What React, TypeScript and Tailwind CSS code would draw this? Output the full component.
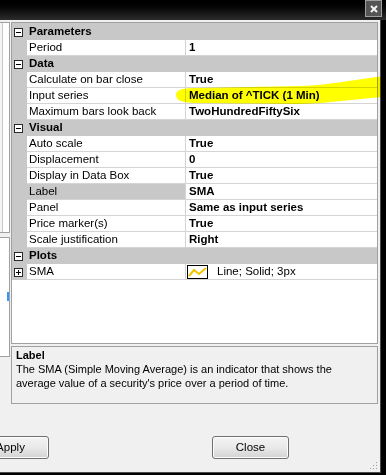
import type { ReactNode } from 'react';

function ToggleBox({ open }: { open: boolean }) {
  return (
    <span className="relative flex h-[9px] w-[9px] items-center justify-center border border-[#2a2a2a] bg-white">
      <span className="h-px w-[5px] bg-black" />
      {!open && <span className="absolute h-[5px] w-px bg-black" />}
    </span>
  );
}

function Category({ label }: { label: string }) {
  return (
    <div className="flex h-[16px] items-center bg-[#c8c8c8]">
      <div className="flex w-[15px] items-center pl-[2px]">
        <ToggleBox open />
      </div>
      <span className="pl-[2px] font-bold">{label}</span>
    </div>
  );
}

interface PropProps {
  name: string;
  value: ReactNode;
  selected?: boolean;
  collapsed?: boolean;
}

function Prop({ name, value, selected, collapsed }: PropProps) {
  return (
    <div className="flex h-[16px]">
      <div className="flex w-[15px] items-center bg-[#c8c8c8] pl-[2px]">
        {collapsed && <ToggleBox open={false} />}
      </div>
      <div
        className={`flex w-[159px] items-center border-b border-r border-[#d4d4d4] pl-[2px] ${
          selected ? 'bg-[#c8c8c8]' : 'bg-white'
        }`}
      >
        {name}
      </div>
      <div className="flex flex-1 items-center border-b border-[#d4d4d4] bg-white pl-[3px] font-bold">{value}</div>
    </div>
  );
}

function LineSwatch() {
  return (
    <span className="flex items-center gap-[9px] font-normal">
      <svg width="21" height="14" viewBox="0 0 21 14" className="-ml-[2px]">
        <rect x="0.5" y="0.5" width="20" height="13" fill="white" stroke="#000" />
        <polyline points="2,11 7,5 12,9 19,3" fill="none" stroke="#f5c400" strokeWidth="2" />
      </svg>
      Line; Solid; 3px
    </span>
  );
}

function WinButton({ label }: { label: string }) {
  return (
    <button className="flex h-[23px] w-[77px] items-center justify-center rounded-[3px] border border-[#707070] bg-gradient-to-b from-[#f4f4f4] via-[#e9e9e9] to-[#d3d3d3] text-[11.5px] text-black shadow-[inset_0_0_0_1px_#fbfbfb]">
      {label}
    </button>
  );
}

export default function App() {
  return (
    <div className="relative flex h-[475px] w-[386px] flex-col overflow-hidden bg-black font-['Liberation_Sans',Arial,sans-serif] text-black">
      {/* title bar */}
      <div className="flex h-[20px] justify-end bg-gradient-to-b from-black via-[#0e0e0e] to-[#2c2c2c] pr-[4px]">
        <div className="flex h-[17px] w-[17px] items-center justify-center border border-[#a0a0a0] bg-[#555555]">
          <svg width="8" height="8" viewBox="0 0 8 8">
            <path d="M1 1 L7 7 M7 1 L1 7" stroke="#f4f4f4" strokeWidth="2" />
          </svg>
        </div>
      </div>

      {/* window body */}
      <div className="relative flex h-[453px] w-[381px] flex-col border-b border-r border-[#4a4a4a] bg-[#f0f0f0]">
        <div className="flex">
          {/* partially visible left pane */}
          <div className="flex w-[11px] flex-col pt-[2px]">
            <div className="flex h-[211px] w-[10px] border-y border-r border-[#a0a0a0] bg-white">
              <div className="w-[3px] border-r border-[#c8c8c8] bg-[#f4f4f4]" />
            </div>
            <div className="mt-[4px] flex h-[120px] w-[10px] flex-col border-y border-r border-[#a0a0a0] bg-white pt-[54px]">
              <div className="ml-auto h-[9px] w-[2px] bg-[#3399ff]" />
            </div>
          </div>

          <div className="flex w-[367px] flex-col pt-[2px]">
            {/* property grid */}
            <div className="flex h-[322px] flex-col border border-[#a0a0a0] bg-white text-[11.5px]">
              <div className="h-px bg-[#c8c8c8]" />
              <Category label="Parameters" />
              <Prop name="Period" value="1" />
              <Category label="Data" />
              <Prop name="Calculate on bar close" value="True" />
              <Prop name="Input series" value="Median of ^TICK (1 Min)" />
              <Prop name="Maximum bars look back" value="TwoHundredFiftySix" />
              <Category label="Visual" />
              <Prop name="Auto scale" value="True" />
              <Prop name="Displacement" value="0" />
              <Prop name="Display in Data Box" value="True" />
              <Prop name="Label" value="SMA" selected />
              <Prop name="Panel" value="Same as input series" />
              <Prop name="Price marker(s)" value="True" />
              <Prop name="Scale justification" value="Right" />
              <Category label="Plots" />
              <Prop name="SMA" value={<LineSwatch />} collapsed />
            </div>

            {/* description */}
            <div className="mt-[2px] h-[58px] border border-[#a0a0a0] bg-[#f0f0f0] px-[4px] pt-px text-[11px] leading-[14px]">
              <p className="font-bold">Label</p>
              <p>
                The SMA (Simple Moving Average) is an indicator that shows the average value of a security's price over
                a period of time.
              </p>
            </div>
          </div>
        </div>

        {/* buttons */}
        <div className="ml-[-28px] mt-[32px] flex gap-[163px]">
          <WinButton label="Apply" />
          <WinButton label="Close" />
        </div>

        {/* resize grip */}
        <svg width="9" height="9" viewBox="0 0 9 9" className="absolute bottom-[2px] right-[2px]">
          {[
            [7, 1],
            [7, 4],
            [4, 4],
            [7, 7],
            [4, 7],
            [1, 7],
          ].map(([x, y]) => (
            <rect key={`${x}-${y}`} x={x} y={y} width="1" height="1" fill="#a0a0a0" />
          ))}
        </svg>
      </div>

      {/* highlighter stroke over the input series row */}
      <svg
        width="386"
        height="475"
        viewBox="0 0 386 475"
        className="pointer-events-none absolute left-0 top-0 mix-blend-multiply"
      >
        <path
          d="M176 95 C176 89 183 88 198 88 L300 86 C332 85 356 79 386 76 L386 97 C360 98 334 103 300 104 L198 103 C183 103 176 101 176 95 Z"
          fill="#ffff00"
        />
      </svg>
    </div>
  );
}
